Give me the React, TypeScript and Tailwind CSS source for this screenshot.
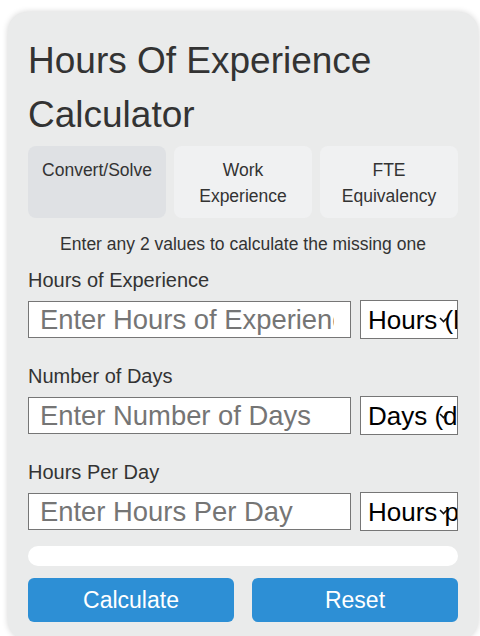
import React from "react";

function Field({ label, placeholder, unit }: { label: string; placeholder: string; unit: string }) {
  return (
    <div className="flex flex-col">
      <label className="text-[20px] leading-[30px] text-[#333]">{label}</label>
      <div className="mt-[5px] flex items-center gap-[9px] h-[39px]">
        <input
          type="text"
          placeholder={placeholder}
          className="w-[323px] h-[37px] border border-[#767676] bg-white pl-[11px] pr-[16px] text-[27.4px] text-black placeholder:text-[#757575] outline-none"
        />
        <div className="relative w-[98px] h-[39px] overflow-hidden">
          <select className="appearance-none w-[98px] h-[39px] border border-[#767676] bg-white pl-[7px] pr-0 text-[26px] text-black">
            <option>{unit}</option>
          </select>
          <svg
            className="pointer-events-none absolute left-[79px] top-[17px]"
            width="9"
            height="6"
            viewBox="0 0 9 6"
            fill="none"
          >
            <path d="M1 1L4.5 4.5L8 1" stroke="#111" strokeWidth="1.6" />
          </svg>
        </div>
      </div>
    </div>
  );
}

export default function App() {
  return (
    <div className="min-h-[636px] bg-white pt-[12px] pl-[8px]" style={{ fontFamily: '"Liberation Sans", Arial, sans-serif' }}>
      <div className="w-[470px] rounded-[20px] bg-[#eaebeb] px-[20px] pt-[22px] pb-[18px] shadow-[0_0_6px_rgba(0,0,0,0.18)]">
        <h1 className="text-[37px] leading-[54px] text-[#333] font-normal">Hours Of Experience Calculator</h1>
        <div className="mt-[4px] grid grid-cols-3 gap-[8px]">
          <button className="rounded-[8px] bg-[#dfe1e4] pt-[11px] pb-[9px] text-[17.5px] leading-[26px] text-[#333] self-stretch">
            <span className="block h-[52px]">Convert/Solve</span>
          </button>
          <button className="rounded-[8px] bg-[#f0f1f2] pt-[11px] pb-[9px] text-[17.5px] leading-[26px] text-[#333]">
            Work<br />Experience
          </button>
          <button className="rounded-[8px] bg-[#f0f1f2] pt-[11px] pb-[9px] text-[17.5px] leading-[26px] text-[#333]">
            FTE<br />Equivalency
          </button>
        </div>
        <p className="mt-[13px] text-center text-[17.5px] leading-[26px] text-[#333]">
          Enter any 2 values to calculate the missing one
        </p>
        <div className="mt-[8px] flex flex-col gap-[22px]">
          <Field label="Hours of Experience" placeholder="Enter Hours of Experience" unit="Hours (hrs)" />
          <Field label="Number of Days" placeholder="Enter Number of Days" unit="Days (d)" />
          <Field label="Hours Per Day" placeholder="Enter Hours Per Day" unit="Hours per day" />
        </div>
        <div className="mt-[15px] h-[20px] rounded-full bg-white" />
        <div className="mt-[12px] grid grid-cols-2 gap-[18px]">
          <button className="h-[44px] rounded-[6px] bg-[#2d8fd5] text-[23px] text-white">Calculate</button>
          <button className="h-[44px] rounded-[6px] bg-[#2d8fd5] text-[23px] text-white">Reset</button>
        </div>
      </div>
    </div>
  );
}
